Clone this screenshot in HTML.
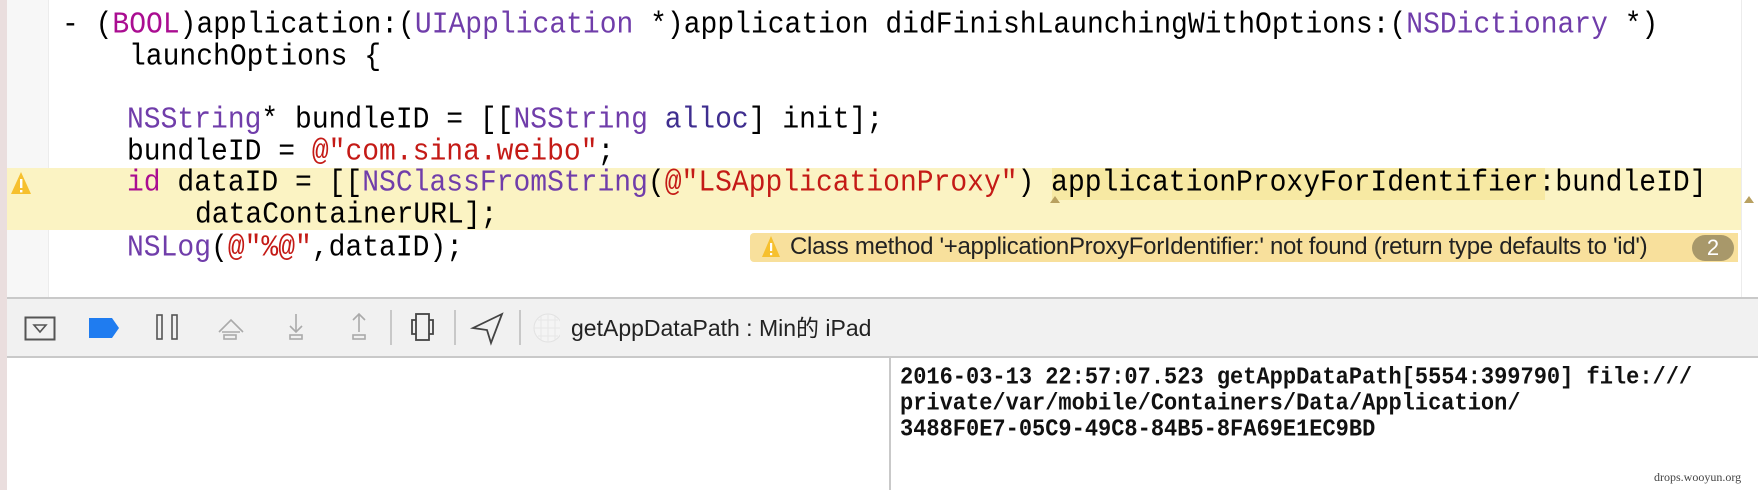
<!DOCTYPE html>
<html><head><meta charset="utf-8"><style>
*{margin:0;padding:0;box-sizing:border-box}
body{width:1758px;height:490px;overflow:hidden;background:#fff;position:relative;font-family:"Liberation Sans","Noto Sans CJK SC",sans-serif}
.abs{position:absolute}
.code{position:absolute;font-family:"Liberation Mono",monospace;font-size:28px;line-height:32px;white-space:pre;color:#000;transform:scaleY(1.1);transform-origin:0 50%}
.t{color:#703daa}.k{color:#aa0d91}.s{color:#c41a16}.m{color:#3f2e8f}
.con{position:absolute;left:900px;font-family:"Liberation Mono",monospace;font-weight:bold;font-size:22px;line-height:26px;white-space:pre;color:#111;transform:scaleY(1.1);transform-origin:0 50%}
</style></head><body>
<div class="abs" style="left:0;top:0;width:7px;height:490px;background:#eadede"></div>
<div class="abs" style="left:7px;top:0;width:42px;height:298px;background:#f7f7f7;border-right:1px solid #ececec"></div>
<div class="abs" style="left:1741px;top:0;width:1px;height:298px;background:#ececec"></div>
<div class="abs" style="left:7px;top:168px;width:1734px;height:62px;background:#fbf3c3"></div>
<div class="abs" style="left:1052px;top:168px;width:493px;height:32px;background:#f7e9a3"></div>
<svg class="abs" style="left:9px;top:170px" width="24" height="26" viewBox="0 0 24 26"><path d="M12 2 L22 24 H2 Z" fill="#f6c02e"/><rect x="11" y="9" width="2.4" height="9" fill="#fff"/><rect x="11" y="20" width="2.4" height="2.4" fill="#fff"/></svg>
<svg class="abs" style="left:1050px;top:196px" width="10" height="7"><path d="M5 0 L10 7 H0Z" fill="#b8a060"/></svg>
<svg class="abs" style="left:1744px;top:196px" width="10" height="7"><path d="M5 0 L10 7 H0Z" fill="#b8a060"/></svg>

<div class="code" style="left:62px;top:10px">- (<span class="k">BOOL</span>)application:(<span class="t">UIApplication</span> *)application didFinishLaunchingWithOptions:(<span class="t">NSDictionary</span> *)</div>
<div class="code" style="left:129px;top:42px">launchOptions {</div>
<div class="code" style="left:127px;top:105px"><span class="t">NSString</span>* bundleID = [[<span class="t">NSString</span> <span class="m">alloc</span>] init];</div>
<div class="code" style="left:127px;top:137px">bundleID = <span class="s">@"com.sina.weibo"</span>;</div>
<div class="code" style="left:127px;top:168px"><span class="k">id</span> dataID = [[<span class="t">NSClassFromString</span>(<span class="s">@"LSApplicationProxy"</span>) applicationProxyForIdentifier:bundleID]</div>
<div class="code" style="left:195px;top:200px">dataContainerURL];</div>
<div class="code" style="left:127px;top:233px"><span class="t">NSLog</span>(<span class="s">@"%@"</span>,dataID);</div>

<div class="abs" style="left:750px;top:233px;width:988px;height:29px;background:#f8e09c;border-radius:4px 0 0 4px"></div>
<svg class="abs" style="left:761px;top:235px" width="20" height="24" viewBox="0 0 20 24"><path d="M10 1 L19 22 H1 Z" fill="#f6c02e"/><rect x="9" y="8" width="2.2" height="8" fill="#fff"/><rect x="9" y="18" width="2.2" height="2.2" fill="#fff"/></svg>
<div class="abs" style="left:790px;top:232px;font-size:24px;line-height:30px;color:#222;white-space:nowrap;letter-spacing:-0.3px">Class method '+applicationProxyForIdentifier:' not found (return type defaults to 'id')</div>
<div class="abs" style="left:1692px;top:235px;width:42px;height:26px;border-radius:13px;background:#a8986a;color:#fff;font-size:22px;line-height:26px;text-align:center">2</div>

<div class="abs" style="left:7px;top:297px;width:1751px;height:61px;background:#f1f1f1;border-top:2px solid #c9c9c9;border-bottom:2px solid #c9c9c9"></div>
<svg class="abs" style="left:0;top:298px" width="560" height="60">
<rect x="25.5" y="19.5" width="29" height="22" fill="none" stroke="#555" stroke-width="2"/>
<path d="M34 27 H46 L40 34 Z" fill="none" stroke="#555" stroke-width="1.6"/>
<path d="M89 20 H112 L119 30 L112 40 H89 Z" fill="#1f7cf0"/>
<rect x="157" y="17" width="5" height="24" fill="none" stroke="#555" stroke-width="1.6"/>
<rect x="172" y="17" width="5" height="24" fill="none" stroke="#555" stroke-width="1.6"/>
<g stroke="#aaa" stroke-width="1.6" fill="none">
<path d="M219 34 L231 22 L243 34 M222 34 H240"/><rect x="224" y="37" width="12" height="4"/>
<path d="M296 16 V34 M290 28 L296 34 L302 28"/><rect x="290" y="37" width="12" height="4"/>
<path d="M359 34 V16 M353 22 L359 16 L365 22"/><rect x="353" y="37" width="12" height="4"/>
</g>
<g stroke="#bbb" stroke-width="1.5"><path d="M391 12 V47 M455 12 V47 M520 12 V47"/></g>
<g stroke="#444" stroke-width="1.8" fill="none">
<rect x="416" y="16" width="13" height="26"/><path d="M416 22 H412 V36 H416 M429 22 H433 V36 H429"/>
<path d="M502 16 L473 30 L487 32 L491 45 Z"/>
</g>
<circle cx="548" cy="30" r="14" fill="#f4f4f4" stroke="#e2e2e2"/>
<g stroke="#e6e6e6" stroke-width="1"><path d="M534 30 H562 M548 16 V44 M538 22 H558 M538 38 H558 M541 18 V42 M555 18 V42"/></g>
</svg>
<div class="abs" style="left:571px;top:313px;font-size:23px;line-height:30px;color:#222;white-space:nowrap">getAppDataPath : Min的 iPad</div>

<div class="abs" style="left:889px;top:358px;width:2px;height:132px;background:#c9c9c9"></div>
<div class="con" style="top:365px">2016-03-13 22:57:07.523 getAppDataPath[5554:399790] file:///</div>
<div class="con" style="top:391px">private/var/mobile/Containers/Data/Application/</div>
<div class="con" style="top:417px">3488F0E7-05C9-49C8-84B5-8FA69E1EC9BD</div>
<div class="abs" style="left:1654px;top:470px;font-family:'Liberation Serif',serif;font-size:12px;color:#444">drops.wooyun.org</div>
</body></html>
